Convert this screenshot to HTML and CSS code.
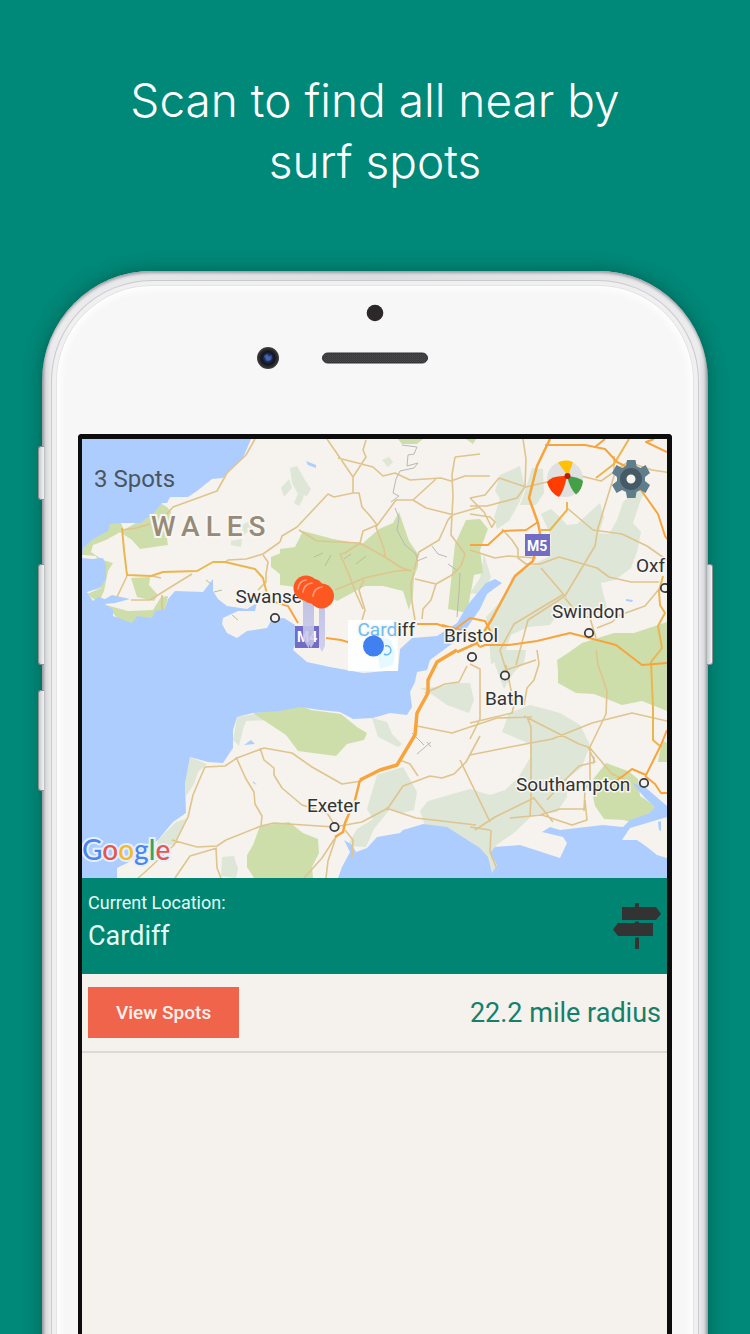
FILE: index.html
```html
<!DOCTYPE html>
<html lang="en">
<head>
<meta charset="utf-8">
<meta name="viewport" content="width=device-width, initial-scale=1">
<title>Scan to find all near by surf spots</title>
<link rel="stylesheet" href="styles.css">
</head>
<body>
<h1 class="headline">Scan to find all near by<br>surf spots</h1>
<main class="phone">
  <span class="side-key mute"></span>
  <span class="side-key volume-up"></span>
  <span class="side-key volume-down"></span>
  <span class="side-key power"></span>
  <div class="glass">
    <div class="sensors">
      <svg class="sensor-art" viewBox="0 0 180 68" width="180" height="68" aria-hidden="true">
        <defs>
          <radialGradient id="lens"><stop offset="0" stop-color="#4566a8"/><stop offset=".4" stop-color="#1a2550"/><stop offset=".58" stop-color="#14161c"/><stop offset=".85" stop-color="#303032"/><stop offset="1" stop-color="#454545"/></radialGradient>
          <pattern id="mesh" width="2" height="2" patternUnits="userSpaceOnUse"><rect width="2" height="2" fill="#39393b"/><rect width="1" height="1" fill="#4c4c4f"/><rect x="1" y="1" width="1" height="1" fill="#454548"/></pattern>
        </defs>
        <circle cx="121" cy="10" r="8.3" fill="#2c2728"/>
        <circle cx="14" cy="55" r="11" fill="url(#lens)"/>
        <path d="M10 53l3-2 2 3 3-2-1 5-4 1z" fill="#4c6dbb" opacity=".7"/>
        <rect x="68.500" y="50" width="105" height="10" rx="5" fill="url(#mesh)" stroke="#303032"/>
      </svg>
    </div>
    <section class="screen">
      <div class="map">
        <svg class="map-art" viewBox="82 439 585 439" role="img" aria-label="Map of South Wales and South West England">
          <defs>
            <linearGradient id="pin" x1="0" y1="0" x2="0" y2="1"><stop offset="0" stop-color="#bfc2e0"/><stop offset="1" stop-color="#c9c8ee" stop-opacity=".8"/></linearGradient>
          </defs>
          <rect x="82" y="439" width="585" height="439" fill="#f6f3ee"/>
          <!-- pale woodland -->
          <g fill="#dde6d7">
            <path d="M500 475l20-9 5 22-6 15-10 18-12 8-3-12 6-18-5-8z"/>
            <path d="M532 468l11 1 1 24-8 12-16 0 5-14z"/>
            <path d="M541 514l10-5 9 8 7 8 10-1 13-12 10-9 4 14-5 16 10 1 8-14 6-18 16-14 10-1-8 12-8 24 8 9-4 20-6 16-16 12-14 3 2 10 5 18-26 5-22-5-10 14-22 2-17 8-8 24-12 5-2-27-3-20 14-15 10-16 1-8 25-15 14-7 1-20z"/>
            <path d="M480 578l4-24 7 23-9 18-12-2z"/>
            <path d="M496 650l30 0-2 13-10 9-10 17-9-24z"/>
            <path d="M420 688l20-1 14-4 16 0 4 17-5 13-22-8-14-10z"/>
            <path d="M372 718l15 4 5 12 10 10-4 3-20-10z"/>
            <path d="M377 775l26-8 14 25-3 18-12 3-12-4-16 20-8 18-19-1 10-17 16-10-6-10z"/>
            <path d="M420 811l8-10 42-12 20 6 15-5 13-12 12-20 0-14-28-12 7-19 21-8 30 8 20 12 10 20-8 22-15 12 0 18-10 15-24 3-18 17-20 14 26 10 40 8 2 14-8 10-38-12-25 2-36-17-22-7z"/>
            <path d="M237 717l30-5 3 8-24 1-3 8-4 17-6-6zM190 757l17 7-9 8-4 12-8 12-1-17z"/>
            <path d="M158 840l18-18 12-4-15 27-16 1zM222 857l12-1 4 13-2 9-15-2z"/>
            <path d="M290 468l7-2 8 14 6 9-4 7-9-2-6-11zM281 488l8-9 3 9-8 9zM300 489l5 1-2 9-4 7-5-3zM382 460l7-3 4 5-5 5zM231 541l11-2-1 8-10-2zM242 525l9-5 1 8-9 8z"/>
          </g>
          <!-- parks and forest -->
          <g fill="#cddeab">
            <path d="M280 549l15-2 8-16 30 8 29 5 17-15 14-6 6-11 10 29 9 13 0 12-4 11-1 17-4 16-6-19-20-5-18 0-28 15-25-12-32-4z"/>
            <path d="M271 557l10-4v22l-10-8zM466 520l14-1 8 10-8 21 3 23-9 2-7 38-19-4 7-65z"/>
            <path d="M398 439h25l-6 5-15 0zM466 439h10l-3 5zM470 520l6 3v43h-6z"/>
            <path d="M568 653l14-10 32-10 20 0 33-11v89l-25-10-20 4-28-11-18-1-18-10 0-12-1-11z"/>
            <path d="M590 783l16-20 22 8 10 8 2 17 17 11-2 10-16 8-15-5-20-1-9-13z"/>
            <path d="M253 713l28-3 20-4 10 4 30 4 16 13 10 6-3 7-17 4-11 12-38-5-12-16z"/>
            <path d="M260 826l29-4 14 11 15 6 1 14-7 14 1 11-59 0-7-11 0-12 6-10z"/>
            <path d="M155 512l5-9 7 4 4 5-5 20 2 13-28 4-8-9-12-8z"/>
            <path d="M108 523h13l3 7-18 10-13 5-2 7 12 8 10 3-5 8-4 20-4 9-5 0-8-6 14-6-1-20-4-12-22-2v-15l20-14z"/>
            <path d="M131 578l19-1-1 8 9 10-4 6-17-4zM106 605l22 6 25-1 8-13 7-1-3 14-10 10-18-1-5 7-14-7z"/>
            <path d="M662 740l5 3v19l-9 0z"/>
          </g>
          <!-- sea -->
          <g fill="#aecdff">
            <path d="M82 439H251L243 458 227 473 223 478 212 479 197 491 188 497 170 497 167 503 162 503 155 512 150 516 140 523 133 523 122 523 110 524 108 531 93 539 83 548 82 558 92 559 103 558 106 565 106 579 100 588 87 592 93 601 98 597 105 599 112 595 130 599 115 603 105 604 113 610 113 616 132 623 137 616 152 618 155 611 165 609 168 599 175 591 203 592 210 583 213 579 213 591 218 599 227 606 247 609 257 603 255 611 238 611 223 618 222 624 227 633 237 638 247 631 267 628 272 619 284 618 295 625 297 640 293 650 307 662 330 667 363 673 398 670 400 649 412 638 437 636 457 623 467 606 470 602 486 583 495 579 502 583 487 594 480 609 467 628 453 643 430 660 427 670 417 672 415 682 410 692 412 707 407 715 390 713 373 718 353 719 340 712 320 710 300 707 280 711 253 713 237 717 233 730 233 748 223 763 208 762 190 757 185 783 186 813 173 822 158 840 137 857 127 863 117 868 117 878H82Z"/>
            <path d="M338 878L342 867 350 852 344 840 352 845 356 852 367 848 377 837 400 833 403 830 423 824 447 827 480 848 488 857 492 873 497 865 490 853 495 847 520 845 560 858 567 843 563 837 542 832 550 827 560 830 603 825 623 827 630 820 650 813 655 807 645 798 632 783 645 787 667 806V817L647 823 630 828 622 840 637 840 647 847 657 855 667 858V878Z"/>
            <path d="M306 461l10 4v3l-8-3zM244 745l7-5 4 4zM626 599l7 1-1 2-6-1zM658 822l3-1v10l-2-1zM593 756l2 1-2 9zM253 781l4 4-4-2z"/>
          </g>
          <!-- county borders and hatching -->
          <g fill="none" stroke="#b9b8b4" stroke-width="1">
            <path d="M402 445l15 2-3 7-6 1-1 11 11-3-4 5-14 3-4 8-3 14 6 3-8 6M395 508l4 10-2 12 8 15 11 9 1 7 10-4M432 546l6 8 9 3M448 564l10 7M460 573l-1 20-2 24M412 733l12 12M417 754l14-12M427 742l4 5"/>
            <path d="M314 557l9-4M325 566l6-11M344 559l7-5M356 564l10-8M206 580l5 4M214 592l8-2M232 615l6 5" stroke="#b3c294"/>
          </g>
          <!-- minor roads -->
          <g fill="none" stroke="#dfc48d" stroke-width="1.600" stroke-linejoin="round">
            <path d="M255 439L246 455 227 473 217 491 173 507 165 516M150 524L136 528 122 530M127 576L117 597M131 600L150 600 174 585 192 574M152 576L161 578M162 595l0 15M225 563l3-3 18-1 17-5 17-12"/>
            <path d="M263 555l5 7-2 12 0 8-8 8M280 542l2-6 15-9 31-33 6 3 19-4 0-16-15-22-11-16M353 477l13-20-3-7 3-10M338 458l35 9 10 9 12-3 15 7 31-2 10 3 14-5 25 0M353 493h6l3 14 9 10 6 8M396 500l-20 27 8 22 1 8M299 530l18 11 43 2 3-12 14-6M396 500h17l23-21M413 500l13 8 28 7M345 553l15-10 25 14 15 10 11 4M345 553l-5 1 10 23 5 14 8 18M414 570l5-18 20-12 9-20 4-5M436 584l16-9 9-9 4-12-8-11-6-8 1-20 1-19-1-21 3-18M455 457l25-3M335 590l20-8 9-4 32-7 15-1M364 580l-5 10 2 7 4 13-3 10M414 572l-3 12 1 18 3 18M415 579l21 5-5 16-8 9-1 10M452 515l28-8"/>
            <path d="M470 498l15-3 14-17 27 9 25-6 10 2 20-7 20 5 27-19 24 8 20 3M523 439l3 20-1 28-8 11-30 8-17 0M470 514l20 3 5 5-3 5M470 498l14 14 8 16M502 529l10 11 6 9 0 9 8 6 14 0 19-7 38 11 12 9 22 5h28M470 550l25 8 13-2 28 2M541 568l24 28 30-50 3-18 16-52 0-20M565 598l12 15 13 5 6 20M567 508l26 22 29 4 25 12 20 14M565 596l-37 24-12 45M564 594l-50 30-14 26"/>
            <path d="M597 628l15-6 8-7 25-9 15-18M537 650l2 14-5 16-7 8-3 17M596 650l2 15 5 14 4 12-1 23-17 35M500 650l6 20 30-10M470 664l10 5 0 50-10 20M506 665l8 40-2 8-42 10"/>
            <path d="M417 726l35 7 30-10 15-5 35-1M527 717l4 10 0 70-1 20M524 716l55 28 9 3 7 15-16 4-18 18-14 16M470 755l40-8 42-8 40-16 40-10 35 8M590 748l22 26 18 8M590 747v35l-5 7-1 22M533 797l20 25M475 830l20-13 39-19M510 818l32-3 30 10 15-5-2-20M540 815l20-6 25 0M491 830l-1 22 6 15M470 827l20 3M460 760l30 62"/>
            <path d="M138 878l6-5 30-28 14-28 5-22 5-12 7-16 20-1 12-8 27-10 28 5 20 14 30 17 20-3M236 757l10 22 8 13 1 12 7 12-1 10-35 14-9 6-20 1-25-7M260 748l4 12 10 8 0 7 8 13 20 17 25 8 9 14M216 848l1 20 4 10M217 848l-27 8-15 22M261 826l13-3 60 4 28-5 26-14 15-22 27-10 12 2 12-4 12-12 14-26M386 808l30 10 60 7M335 838l-13 20-18 20M336 837l-8 24-2 17M345 830l8 10-1 18M425 693l20-9 14-2 8-16M400 760l10 4 8 12"/>
          </g>
          <!-- main roads -->
          <g fill="none" stroke="#ebb64e" stroke-width="2" stroke-linejoin="round">
            <path d="M122 528l2 22 3 25 24 1 12-4 34-1 16-9 12 0 30 7 8 9 4 16"/>
            <path d="M629 439l-15 25-18 14M567 502l0 8-17 20-9 0M663 576l-4 15 1 14 5 8-7 13 4 22-11 14 2 46v32l8 7"/>
          </g>
          <!-- motorways -->
          <g fill="none" stroke="#f7a43c" stroke-width="2" stroke-linejoin="round">
            <path d="M550 439L537 466 529 498 538 523 540 533 533 561 515 576 492 619 477 643 457 652" stroke-width="2.500"/>
            <path d="M457 650L437 662 428 680 428 693 417 713 415 735 397 765 380 770 360 780" stroke-width="3.500"/>
            <path d="M360 780L355 800 345 823 343 832 335 837" stroke-width="2.500"/>
            <path d="M545 445l40 0 20 4 12 13 20 10M641 490l17 24 7 22 3 4M605 439l-10 8M654 439l-8 3 21 10M470 545l18 0 15-14 23-1 12-8M268 600l20 6 10 17M326 638l15 2 10 3M417 624l20 0 17 6 16-12 15 3 10 19M442 625l23 6 15 16M480 647l5-2 24 0 28-4 33-8 46 12 26 20 25-2M667 730l-6 15-15 30-14-6-9 7-6 4M645 776l10 8 6 9 6 0"/>
          </g>
          <!-- highlighted tile round the user's position -->
          <rect x="348" y="620" width="50" height="51" fill="#fdfffe"/>
          <path d="M380 636l11 4 4 13-2 12-13 4-2-12z" fill="#e6f9ff"/>
          <g class="place">
            <text x="235.500" y="603">Swansea</text>
            <text x="357.500" y="636" class="cardiff"><tspan>Card</tspan>iff</text>
            <text x="444" y="642">Bristol</text>
            <text x="552" y="618">Swindon</text>
            <text x="485" y="705">Bath</text>
            <text x="516" y="791">Southampton</text>
            <text x="307" y="812">Exeter</text>
            <text x="636" y="572">Oxf</text>
          </g>
          <text class="country" x="151" y="536">WALES</text>
          <g fill="#f4f3f1" stroke="#3c3c3c" stroke-width="1.800">
            <circle cx="275" cy="618" r="4.200"/><circle cx="472" cy="657" r="4.200"/><circle cx="589" cy="633" r="4.200"/><circle cx="505" cy="675.500" r="4.200"/><circle cx="644" cy="783" r="4.200"/><circle cx="334.500" cy="827" r="4.200"/><circle cx="665" cy="588" r="4.200"/>
          </g>
          <path d="M385 646a4.500 4.500 0 1 1-1 8" fill="none" stroke="#69b8ee" stroke-width="1.500"/>
          <g fill="#716dc4"><rect x="525" y="534" width="25" height="22"/><rect x="295" y="626" width="24" height="22"/></g>
          <g class="shield"><text x="527" y="550.500">M5</text><text x="297" y="642">M4</text></g>
          <!-- pins -->
          <path d="M303 598h6v51l-3-5-3-5zM308 598h6v45l-3 5-3-5zM319 604h6v42l-3 6-3-6z" fill="url(#pin)"/>
          <g fill="#fd5821"><circle cx="306" cy="588" r="12.500"/><circle cx="312" cy="591" r="12.500"/><circle cx="321.500" cy="596" r="12.500"/></g>
          <g fill="none" stroke="#ffa084" stroke-width="1.700" stroke-linecap="round"><path d="M298 589q1-8 8-9M303 592q1-8 9-9M313 596q1-8 9-9"/></g>
          <circle cx="373.500" cy="646" r="10.500" fill="#4080f0"/>
          <text class="google" x="82" y="860"><tspan fill="#4a86ee">G</tspan><tspan fill="#e2574e">o</tspan><tspan fill="#f0bb2c">o</tspan><tspan fill="#4a86ee">g</tspan><tspan fill="#38a45a">l</tspan><tspan fill="#e2574e">e</tspan></text>
        </svg>
        <div class="map-bar">
          <span class="spot-count">3 Spots</span>
          <button class="icon-button" type="button" aria-label="Scan beaches">
            <svg viewBox="0 0 38 38" width="38" height="38" aria-hidden="true">
              <circle cx="19" cy="19" r="18" fill="#e0e0e0"/>
              <path d="M12 2.500Q19-1 27 2L22 16z" fill="#ffc107"/>
              <path d="M21 16Q6 15 1 22Q4 33 13 37Q18 31 21 16z" fill="#ff3d00"/>
              <path d="M21 16Q33 17 37 21Q36 30 30 34.500Q24 29 21 16z" fill="#43a047"/>
              <circle cx="21.500" cy="16" r="3" fill="#b71c0c"/>
            </svg>
          </button>
          <button class="icon-button" type="button" aria-label="Settings">
            <svg viewBox="0 0 38 38" width="38" height="38" aria-hidden="true">
              <path fill="#607d8b" fill-rule="evenodd" d="M15 0h8.500l1 6 4 2 5-3 4.500 8-5 4v4l5 4-4.500 8-5-3-4 2-1 6H15l-1-6-4-2-5.500 3L0 25l5-4v-4l-5-4 4.500-8 5.500 3 4-2zM19 13.500a5.500 5.500 0 1 0 0 11 5.500 5.500 0 0 0 0-11z"/>
              <path fill="#455a64" fill-rule="evenodd" d="M19 8a11 11 0 1 0 0 22 11 11 0 0 0 0-22zm0 6.500a4.500 4.500 0 1 1 0 9 4.500 4.500 0 0 1 0-9z"/>
            </svg>
          </button>
        </div>
      </div>
      <div class="location">
        <div class="location-text">
          <p class="location-label">Current Location:</p>
          <p class="location-name">Cardiff</p>
        </div>
        <button class="icon-button" type="button" aria-label="Change location">
          <svg viewBox="0 0 48 48" width="48" height="48" aria-hidden="true">
            <path fill="#333" d="M22 1h4v4h17l5 7-5 6H9V5h13zM22 19.500h4V21h14v13H5l-5-6.500L5 21h17zM22 35.500h4V47h-4z"/>
          </svg>
        </button>
      </div>
      <div class="actions">
        <button class="view-spots" type="button">View Spots</button>
        <span class="radius">22.2 mile radius</span>
      </div>
    </section>
  </div>
</main>
</body>
</html>
```

FILE: styles.css
```css
* { box-sizing: border-box; }

body {
  margin: 0;
  height: 100vh;
  display: flex;
  flex-direction: column;
  overflow: hidden;
  background: #008878;
  font-family: Roboto, "Liberation Sans", sans-serif;
}

.headline {
  margin: 0;
  padding: 70px 16px 79px;
  color: #fff;
  font-family: Inter, "Liberation Sans", sans-serif;
  font-size: 46px;
  font-weight: 300;
  line-height: 61px;
  text-align: center;
}

.phone {
  position: relative;
  flex: 1;
  display: flex;
  margin: 0 42px -24px;
  padding: 9px 9px 0;
  border-radius: 110px 110px 0 0;
  background: linear-gradient(90deg, #9a9ca0 0, #d9dadd 4px, #ececee 9px, #dcdde0 50%, #ececee calc(100% - 9px), #d9dadd calc(100% - 4px), #9a9ca0 100%);
  box-shadow: 0 0 18px rgba(0, 60, 50, 0.5), inset 0 2px 3px #9b9da1;
}

.glass {
  flex: 1;
  display: flex;
  flex-direction: column;
  padding: 0 26px;
  border: 1px solid #c9cacd;
  border-bottom: 0;
  border-radius: 101px 101px 0 0;
  background: #f7f7f7;
  box-shadow: inset 0 0 0 4px #f0f0f0, inset 0 0 0 5px #e4e4e5, inset 0 0 8px 8px #fff;
}

.side-key {
  position: absolute;
  left: -4px;
  width: 6px;
  border: 1px solid #8c9192;
  border-right: 0;
  border-radius: 3px 0 0 3px;
  background: linear-gradient(90deg, #c4cccb, #f3f5f5);
}

.mute { top: 175px; height: 54px; }
.volume-up { top: 293px; height: 101px; }
.volume-down { top: 419px; height: 101px; }
.power {
  top: 293px;
  right: -5px;
  left: auto;
  height: 101px;
  border: 1px solid #8c9192;
  border-left: 0;
  border-radius: 0 3px 3px 0;
}

.sensors {
  display: flex;
  justify-content: center;
  padding: 22px 0 63px;
}

.sensor-art { margin-right: 62px; }

.screen {
  flex: 1;
  display: flex;
  flex-direction: column;
  border: 5px solid #0c0d0c;
  border-width: 5px 5px 0 4px;
  border-radius: 4px 4px 0 0;
  background: #f5f1ec;
}

.map { position: relative; }
.map-art { display: block; width: 100%; height: auto; }

.map-bar {
  position: absolute;
  top: 0;
  left: 0;
  right: 0;
  display: flex;
  align-items: center;
  gap: 28px;
  padding: 21px 17px 0 12px;
}

.spot-count {
  flex: 1;
  color: #4a5560;
  font-size: 24px;
  line-height: 38px;
}

.icon-button {
  display: block;
  padding: 0;
  border: 0;
  background: none;
  cursor: pointer;
}

.icon-button svg { display: block; }

.place {
  fill: #333;
  stroke: #f8f6f2;
  stroke-width: 3px;
  paint-order: stroke;
  font-size: 19px;
}

.cardiff tspan { fill: #6fbdf2; }

.country {
  fill: #968b78;
  stroke: #f8f6f2;
  stroke-width: 4px;
  paint-order: stroke;
  font-size: 28px;
  font-weight: 500;
  letter-spacing: 6px;
}

.shield { fill: #fff; font-size: 14px; font-weight: 700; }

.google {
  stroke: #e6effc;
  stroke-width: 4px;
  paint-order: stroke;
  font-family: Lato, sans-serif;
  font-size: 28px;
  font-weight: 500;
}

.location {
  display: flex;
  align-items: center;
  justify-content: space-between;
  min-height: 96px;
  padding: 12px 6px;
  background: #008573;
  color: #e2fbf5;
}

.location-text { align-self: flex-start; }
.location p { margin: 0; }
.location-label { font-size: 18px; line-height: 26px; }
.location-name { font-size: 27px; line-height: 40px; }

.actions {
  display: flex;
  align-items: center;
  justify-content: space-between;
  padding: 13px 6px;
  border-bottom: 2px solid #dcd8d6;
}

.view-spots {
  padding: 0 28px;
  border: 0;
  background: #f0644c;
  color: #fff1ed;
  font-family: inherit;
  font-size: 19px;
  font-weight: 500;
  line-height: 51px;
  cursor: pointer;
}

.radius {
  color: #14806c;
  font-size: 27px;
  line-height: 32px;
}
```
